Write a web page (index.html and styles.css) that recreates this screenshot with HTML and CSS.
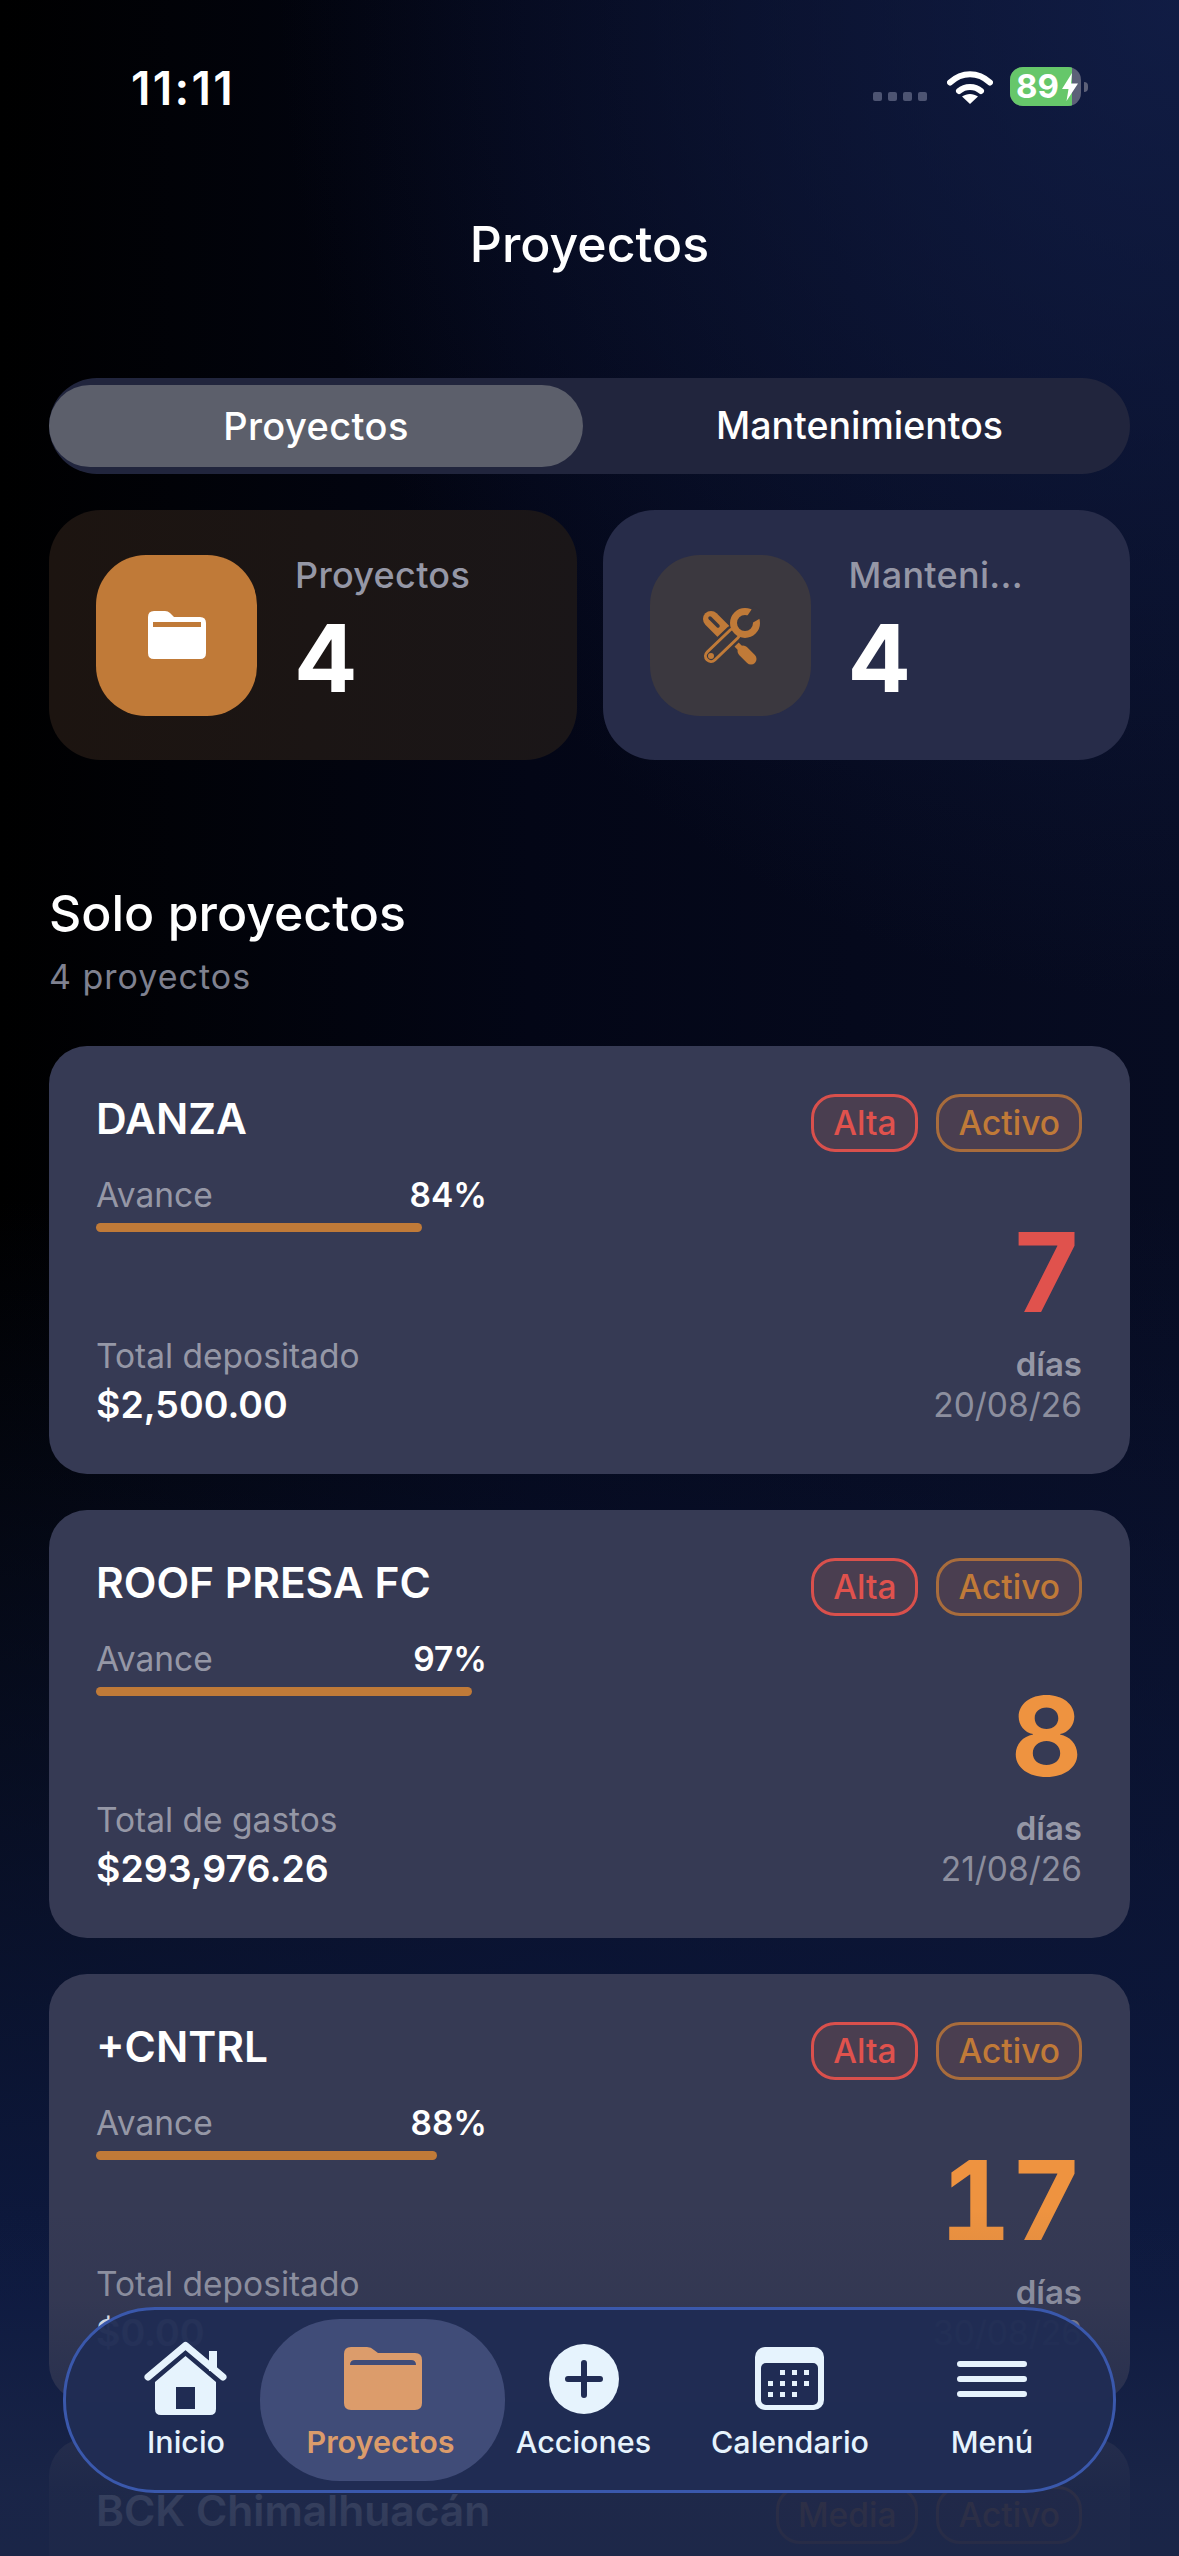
FILE: index.html
```html
<!DOCTYPE html>
<html lang="es">
<head>
    <meta charset="utf-8">
    <title>Proyectos</title>
    <link rel="stylesheet" href="styles.css">
</head>
<body>
<div id="screen">
    <div class="status">
        <span class="time">11:11</span>
        <div class="status-right">
            <div class="signal"><i></i><i></i><i></i><i></i></div>
            <svg class="wifi" viewBox="0 0 46 34" width="46" height="34">
                <path d="M3 12.500C15 1.500 31 1.500 43 12.500" fill="none" stroke="#fff" stroke-width="6" stroke-linecap="round"/>
                <path d="M12 21C18 15.500 28 15.500 34 21" fill="none" stroke="#fff" stroke-width="6" stroke-linecap="round"/>
                <path d="M23 34L15 26.500C20 23 26 23 31 26.500Z" fill="#fff"/>
            </svg>
            <div class="battery">
                <div class="battery-fill"></div>
                <span class="battery-num">89</span>
                <svg class="bolt" viewBox="0 0 16 28" width="16" height="28"><path d="M10 0L0 16H6.500L4.500 28L16 10.500H9Z" fill="#fff"/></svg>
            </div>
            <i class="battery-nub"></i>
        </div>
    </div>

    <h1 class="page-title">Proyectos</h1>

    <div class="tabs">
        <div class="tab tab-on">Proyectos</div>
        <div class="tab tab-off">Mantenimientos</div>
    </div>

    <div class="stats">
        <div class="stat stat-dark">
            <div class="stat-icon stat-icon-orange">
                <svg viewBox="0 0 58 48" width="58" height="48">
                    <path d="M0 6Q0 0 6 0H17Q20 0 22 2L26 6H52Q58 6 58 12V42Q58 48 52 48H6Q0 48 0 42Z" fill="#fff"/>
                    <rect x="5" y="11" width="48" height="5" fill="#c07a38"/>
                </svg>
            </div>
            <div class="stat-text">
                <div class="stat-label">Proyectos</div>
                <div class="stat-num">4</div>
            </div>
        </div>
        <div class="stat stat-blue">
            <div class="stat-icon stat-icon-gray">
                <svg viewBox="0 -3 60 60" width="60" height="60">
                    <path d="M11 11L24 24" stroke="#c07a38" stroke-width="16" stroke-linecap="round"/>
                    <path d="M10 10L18 18" stroke="#3b383f" stroke-width="3.500" stroke-linecap="round"/>
                    <path d="M26 26L46 46" stroke="#c07a38" stroke-width="6"/>
                    <path d="M43 43L51 51" stroke="#c07a38" stroke-width="11" stroke-linecap="round"/>
                    <path d="M34 26L11 48" stroke="#3b383f" stroke-width="19" stroke-linecap="round"/>
                    <path d="M34 26L11 48" stroke="#c07a38" stroke-width="14" stroke-linecap="round"/>
                    <path d="M34 26L11 48" stroke="#3b383f" stroke-width="8" stroke-linecap="round"/>
                    <circle cx="11" cy="48" r="3" fill="#c07a38"/>
                    <circle cx="45" cy="15" r="11.500" fill="none" stroke="#c07a38" stroke-width="7"/>
                    <path d="M43 14L54 -2L66 7L47 18Z" fill="#3b383f"/>
                </svg>
            </div>
            <div class="stat-text">
                <div class="stat-label">Manteni...</div>
                <div class="stat-num">4</div>
            </div>
        </div>
    </div>

    <h2 class="section-title">Solo proyectos</h2>
    <div class="section-sub">4 proyectos</div>

    <div class="card-list">
        <div class="card">
            <div class="card-left">
                <div class="card-name">DANZA</div>
                <div class="avance"><span>Avance</span><b>84%</b></div>
                <div class="track"><div class="bar" style="width:84%"></div></div>
                <div class="total">Total depositado</div>
                <div class="money">$2,500.00</div>
            </div>
            <div class="card-right">
                <div class="badges"><span class="badge badge-red">Alta</span><span class="badge badge-orange">Activo</span></div>
                <div class="days days-red">7</div>
                <div class="days-label">días</div>
                <div class="date">20/08/26</div>
            </div>
        </div>
        <div class="card">
            <div class="card-left">
                <div class="card-name">ROOF PRESA FC</div>
                <div class="avance"><span>Avance</span><b>97%</b></div>
                <div class="track"><div class="bar" style="width:97%"></div></div>
                <div class="total">Total de gastos</div>
                <div class="money">$293,976.26</div>
            </div>
            <div class="card-right">
                <div class="badges"><span class="badge badge-red">Alta</span><span class="badge badge-orange">Activo</span></div>
                <div class="days days-orange">8</div>
                <div class="days-label">días</div>
                <div class="date">21/08/26</div>
            </div>
        </div>
        <div class="card">
            <div class="card-left">
                <div class="card-name">+CNTRL</div>
                <div class="avance"><span>Avance</span><b>88%</b></div>
                <div class="track"><div class="bar" style="width:88%"></div></div>
                <div class="total">Total depositado</div>
                <div class="money">$0.00</div>
            </div>
            <div class="card-right">
                <div class="badges"><span class="badge badge-red">Alta</span><span class="badge badge-orange">Activo</span></div>
                <div class="days days-orange">17</div>
                <div class="days-label">días</div>
                <div class="date">30/08/26</div>
            </div>
        </div>
        <div class="card">
            <div class="card-left">
                <div class="card-name">BCK Chimalhuacán</div>
            </div>
            <div class="card-right">
                <div class="badges"><span class="badge badge-orange">Media</span><span class="badge badge-orange">Activo</span></div>
            </div>
        </div>
    </div>

    <div class="fade"></div>

    <div class="nav">
        <div class="nav-item nav-inicio">
            <svg viewBox="0 0 84 76" width="84" height="76">
                <path d="M4 36L41.500 4.500L79 36" fill="none" stroke="#e6f3fd" stroke-width="7" stroke-linecap="round" stroke-linejoin="round"/>
                <rect x="65" y="10" width="8" height="20" fill="#e6f3fd"/>
                <path fill-rule="evenodd" d="M41.500 15L72 41V68Q72 74 66 74H17Q11 74 11 68V41ZM32 46V68H51V46Z" fill="#e6f3fd"/>
            </svg>
            <span>Inicio</span>
        </div>
        <div class="nav-item nav-proy nav-on">
            <svg viewBox="0 0 84 76" width="84" height="76">
                <path d="M3 13Q3 6 10 6H26Q30 6 33 9L37 12H74Q81 12 81 19V62Q81 69 74 69H10Q3 69 3 62Z" fill="#dc9c6b"/>
                <path d="M9 24Q9 19 14 19H70Q75 19 75 24H9Z" fill="#404c78"/>
            </svg>
            <span>Proyectos</span>
        </div>
        <div class="nav-item nav-acc">
            <svg viewBox="0 0 84 76" width="84" height="76">
                <circle cx="42" cy="38" r="35" fill="#e6f3fd"/>
                <path d="M26 38H58M42 22V54" stroke="#202c54" stroke-width="6" stroke-linecap="round"/>
            </svg>
            <span>Acciones</span>
        </div>
        <div class="nav-item nav-cal">
            <svg viewBox="0 0 84 76" width="84" height="76">
                <rect x="7" y="6" width="69" height="63" rx="10" fill="#e6f3fd"/>
                <rect x="13" y="22" width="57" height="42" rx="5" fill="#202c54"/>
                <g fill="#e6f3fd">
                    <rect x="32" y="29" width="5" height="5"/><rect x="44" y="29" width="5" height="5"/><rect x="56" y="29" width="5" height="5"/>
                    <rect x="20" y="40" width="5" height="5"/><rect x="32" y="40" width="5" height="5"/><rect x="44" y="40" width="5" height="5"/><rect x="56" y="40" width="5" height="5"/>
                    <rect x="20" y="51" width="5" height="5"/><rect x="32" y="51" width="5" height="5"/><rect x="44" y="51" width="5" height="5"/>
                </g>
            </svg>
            <span>Calendario</span>
        </div>
        <div class="nav-item nav-menu">
            <svg viewBox="0 0 84 76" width="84" height="76">
                <path d="M10 23H74M10 38H74M10 53H74" stroke="#e6f3fd" stroke-width="6" stroke-linecap="round"/>
            </svg>
            <span>Menú</span>
        </div>
    </div>
</div>
</body>
</html>
```
FILE: styles.css
```css
html, body {
    margin: 0;
    padding: 0;
    background: #000;
}
#screen {
    position: relative;
    width: 1179px;
    height: 2556px;
    overflow: hidden;
    padding: 0 49px;
    box-sizing: border-box;
    font-family: Inter, "Liberation Sans", sans-serif;
    color: #fff;
    background:
        linear-gradient(180deg, rgba(14,26,64,0) 1200px, rgba(14,26,64,1) 2300px),
        radial-gradient(900px 1000px at 100% 0, rgba(20,34,80,.75), rgba(6,14,45,0) 100%),
        linear-gradient(90deg, #000 0, #030616 45%, #070c22 100%);
}

/* status bar */
.status {
    height: 130px;
    display: flex;
    justify-content: space-between;
    align-items: flex-start;
    padding: 62px 42px 0 82px;
    box-sizing: border-box;
}
.time {
    font-size: 46px;
    font-weight: 600;
    line-height: 52px;
    letter-spacing: 2.300px;
}
.status-right {
    display: flex;
    align-items: center;
    margin-top: 5px;
    height: 39px;
}
.signal {
    display: flex;
    gap: 6px;
    margin: 20px 20px 0 0;
}
.signal i {
    width: 9px;
    height: 9px;
    border-radius: 2px;
    background: #4d5472;
}
.wifi {
    margin-right: 17px;
}
.battery {
    position: relative;
    width: 71px;
    height: 39px;
    border-radius: 13px;
    overflow: hidden;
    background: #5c6078;
}
.battery-fill {
    width: 62px;
    height: 39px;
    background: #66c76a;
}
.battery-num {
    position: absolute;
    left: 6px;
    top: 0;
    font-size: 33px;
    font-weight: 700;
    line-height: 39px;
}
.bolt {
    position: absolute;
    left: 52px;
    top: 6px;
}
.battery-nub {
    display: block;
    width: 4px;
    height: 10px;
    margin-left: 3px;
    border-radius: 0 4px 4px 0;
    background: #5c6078;
}

.page-title {
    margin: 84px 0 104px;
    height: 60px;
    font-size: 50px;
    font-weight: 500;
    line-height: 60px;
    text-align: center;
}

/* tabs */
.tabs {
    display: flex;
    height: 96px;
    padding: 7px 0;
    box-sizing: border-box;
    border-radius: 48px;
    background: #21253d;
}
.tab {
    flex: 1;
    font-size: 38px;
    font-weight: 500;
    line-height: 82px;
    text-align: center;
}
.tab-off {
    padding-left: 6px;
    font-size: 37.500px;
}
.tab-on {
    flex: none;
    width: 534px;
    border-radius: 41px;
    letter-spacing: .4px;
    background: #5c5f6b;
}

/* stat cards */
.stats {
    display: flex;
    gap: 26px;
    margin-top: 36px;
}
.stat {
    flex: 1;
    height: 250px;
    display: flex;
    align-items: center;
    gap: 38px;
    padding: 0 47px;
    box-sizing: border-box;
    border-radius: 52px;
}
.stat-dark {
    background: linear-gradient(90deg, #1c1410, #1a1618);
}
.stat-blue {
    background: #272c49;
}
.stat-icon {
    width: 161px;
    height: 161px;
    flex: none;
    display: flex;
    align-items: center;
    justify-content: center;
    border-radius: 50px;
}
.stat-icon-orange {
    background: #c07a38;
}
.stat-icon-gray {
    background: #3b383f;
}
.stat-text {
    height: 161px;
}
.stat-label {
    font-size: 36px;
    font-weight: 500;
    line-height: 40px;
    letter-spacing: .3px;
    color: #9597a6;
}
.stat-num {
    margin: 8px 0 0 -1px;
    font-size: 94px;
    font-weight: 700;
    line-height: 110px;
}

.section-title {
    margin: 123px 0 0;
    font-size: 50px;
    font-weight: 500;
    line-height: 60px;
}
.section-sub {
    margin-top: 11px;
    font-size: 34px;
    line-height: 46px;
    color: #7f8190;
    letter-spacing: 1px;
}

/* project cards */
.card-list {
    display: flex;
    flex-direction: column;
    gap: 36px;
    margin-top: 46px;
}
.card {
    height: 428px;
    flex: none;
    display: flex;
    justify-content: space-between;
    padding: 48px 48px 47px 47px;
    box-sizing: border-box;
    border-radius: 38px;
    background: #363a54;
}
.card-left {
    width: 388px;
    display: flex;
    flex-direction: column;
    white-space: nowrap;
}
.card-name {
    font-size: 42.500px;
    font-weight: 600;
    line-height: 50px;
}
.avance {
    display: flex;
    justify-content: space-between;
    margin: 31px -3px 0 0;
    font-size: 33.500px;
    line-height: 40px;
    color: #9597a6;
}
.avance b {
    font-weight: 600;
    color: #fff;
}
.track {
    margin-top: 8px;
}
.bar {
    height: 9px;
    border-radius: 5px;
    background: #c07a38;
}
.total {
    margin-top: auto;
    font-size: 33.500px;
    line-height: 40px;
    color: #9597a6;
}
.money {
    margin-top: 7px;
    font-size: 37.500px;
    font-weight: 600;
    line-height: 44px;
}
.card-right {
    display: flex;
    flex-direction: column;
    align-items: flex-end;
}
.badges {
    display: flex;
    gap: 18px;
}
.badge {
    height: 58px;
    padding: 0 19px;
    box-sizing: border-box;
    border: 3px solid;
    border-radius: 24px;
    font-size: 33.500px;
    font-weight: 500;
    line-height: 52px;
    background: #4a3e50;
}
.badge-red {
    color: #e0524d;
    border-color: #d9504c;
}
.badge-orange {
    color: #c07a38;
    border-color: #a86c3c;
}
.days {
    margin-top: auto;
    font-size: 110px;
    font-weight: 700;
    line-height: 110px;
    font-variant-numeric: tabular-nums;
}
.days-red {
    color: #e0524d;
}
.days-orange {
    color: #ee9340;
}
.days-label {
    margin-top: 17px;
    font-size: 33px;
    font-weight: 600;
    line-height: 40px;
    color: #9597a6;
}
.date {
    margin-top: -1px;
    font-size: 33.500px;
    line-height: 44px;
    color: #8c8e9e;
}

/* fade under the nav */
.fade {
    position: absolute;
    left: 0;
    right: 0;
    bottom: 0;
    height: 346px;
    background: linear-gradient(180deg, rgba(27,38,72,0) 0, rgba(27,38,72,.1) 26%, rgba(27,38,72,.5) 55%, rgba(27,38,72,.88) 81%, rgba(27,38,72,.92) 100%);
}

/* bottom nav */
.nav {
    position: absolute;
    left: 63px;
    bottom: 63px;
    width: 1053px;
    height: 186px;
    display: flex;
    align-items: center;
    padding-left: 46px;
    box-sizing: border-box;
    border: 3px solid #3a58ac;
    border-radius: 92px;
    background: rgba(32,44,84,.97);
}
.nav-item {
    height: 162px;
    flex: none;
    display: flex;
    flex-direction: column;
    align-items: center;
    padding-top: 22px;
    box-sizing: border-box;
    font-size: 30.500px;
    font-weight: 500;
    line-height: 40px;
    color: #e6f3fd;
}
.nav-item span {
    margin-top: 5px;
}
.nav-inicio {
    width: 148px;
}
.nav-proy {
    width: 245px;
}
.nav-acc {
    width: 157px;
}
.nav-cal {
    width: 256px;
}
.nav-menu {
    width: 148px;
}
.nav-on {
    border-radius: 80px;
    background: #404c78;
    color: #dc9c6b;
    font-weight: 600;
}
.nav-on span {
    margin-left: -4px;
}
```
